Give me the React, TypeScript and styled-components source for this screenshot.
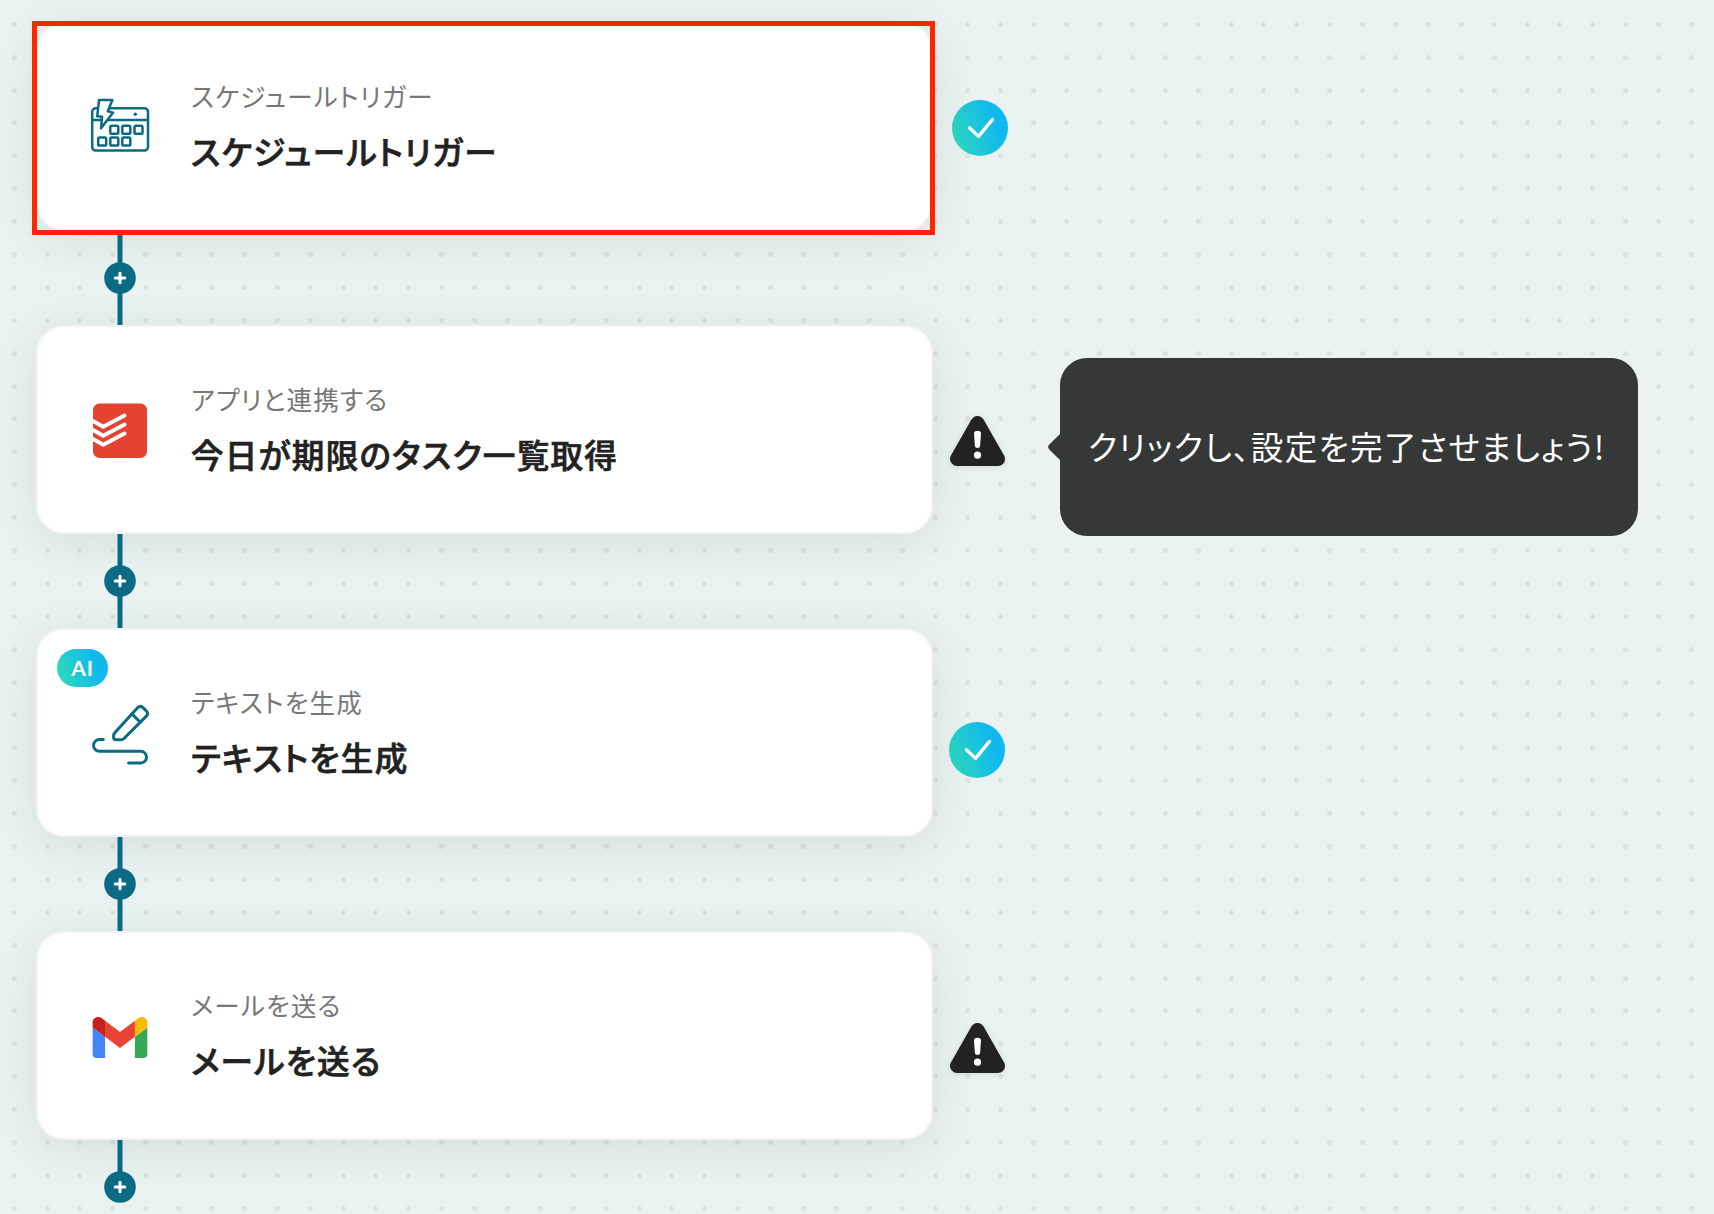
import styled, { createGlobalStyle } from "styled-components"

type IconName = 'calendar' | 'todoist' | 'pen' | 'gmail'

interface Step {
    label: string
    title: string
    icon: IconName
    done: boolean
    ai?: boolean
    selected?: boolean
    hint?: string
    statusTop: number
    statusGap: number
}

const steps: Step[] = [
    { label: 'スケジュールトリガー', title: 'スケジュールトリガー', icon: 'calendar', done: true, selected: true, statusTop: 77.5, statusGap: 19 },
    { label: 'アプリと連携する', title: '今日が期限のタスク一覧取得', icon: 'todoist', done: false, hint: 'クリックし、設定を完了させましょう!', statusTop: 91.3, statusGap: 17 },
    { label: 'テキストを生成', title: 'テキストを生成', icon: 'pen', done: true, ai: true, statusTop: 94, statusGap: 16 },
    { label: 'メールを送る', title: 'メールを送る', icon: 'gmail', done: false, statusTop: 91.5, statusGap: 17 },
]

const PITCH = 32.889

function DotGrid () {
    const dots = []
    for (let row = 0; row < 37; row++) {
        for (let col = 0; col < 52; col++) {
            dots.push(
                <circle
                    key={`${row}-${col}`}
                    cx={14.5 + Math.floor(col * PITCH + 0.15)}
                    cy={24.5 + Math.floor(row * PITCH + 0.28)}
                    r="2.5"
                />
            )
        }
    }
    return <Dots width="1714" height="1214" fill="#dbe2e1">{dots}</Dots>
}

function CalendarIcon () {
    return (
        <svg width="64" height="65" viewBox="0 0 64 65" fill="none" stroke="#0b6a84" strokeWidth="2.5" strokeLinejoin="round">
            <rect x="4.2" y="14.3" width="55.8" height="42.3" rx="3.5" />
            <path d="M4 26h56" />
            <circle cx="47.3" cy="20.3" r="1.7" fill="#0b6a84" stroke="none" />
            <rect x="22.3" y="31.8" width="8" height="8" rx="1.4" />
            <rect x="34.3" y="31.8" width="8" height="8" rx="1.4" />
            <rect x="46.5" y="31.8" width="8" height="8" rx="1.4" />
            <rect x="10.2" y="43.6" width="8" height="8" rx="1.4" />
            <rect x="22.3" y="43.6" width="8" height="8" rx="1.4" />
            <rect x="34.3" y="43.6" width="8" height="8" rx="1.4" />
            <path d="M11 6h13.4l-4.6 11.3 5.3 1.3-12 15.6 1-11.5-4.9-.4z" fill="#fff" />
        </svg>
    )
}

function TodoistIcon () {
    return (
        <svg width="64" height="65" viewBox="0 0 64 65">
            <clipPath id="todoist">
                <rect x="5" y="6.5" width="54" height="54.5" rx="6.5" />
            </clipPath>
            <g clipPath="url(#todoist)">
                <rect x="5" y="6" width="54" height="55" fill="#e44332" />
                <g fill="none" stroke="#fff" strokeWidth="3.9" strokeLinecap="round" strokeLinejoin="round">
                    <path d="M3 22.8l12.2 7L36.5 18.5" />
                    <path d="M3 31.8l12.2 7L36.5 27.5" />
                    <path d="M3 40.8l12.2 7L36.5 36.5" />
                </g>
            </g>
        </svg>
    )
}

function PenIcon () {
    return (
        <svg width="64" height="65" viewBox="0 0 64 65" fill="none" stroke="#0b6a84" strokeWidth="3" strokeLinecap="round" strokeLinejoin="round">
            <path d="M25.6 36q0-2 1.4-3.4L49.8 7.6q2.7-2.4 5.2 0l3.6 3.7q2.1 2.3 0 4.6L36 38.5q-1.4 1.3-3.2 1.3H28.1q-2.5 0-2.5-2.5z" />
            <path d="M43.8 13.8l8.5 8.4" />
            <path d="M15.3 39.6H11.4a5.85 5.85 0 0 0 0 11.7H52.7a5.85 5.85 0 0 1 0 11.7H40.6" />
        </svg>
    )
}

function GmailIcon () {
    return (
        <svg width="64" height="65" viewBox="0 0 64 65">
            <g transform="translate(4.6 14) scale(.622 .62) translate(-52 -42)">
                <path fill="#4285f4" d="M58 108h14V74L52 59v43c0 3.32 2.69 6 6 6" />
                <path fill="#34a853" d="M120 108h14c3.32 0 6-2.69 6-6V59l-20 15" />
                <path fill="#fbbc04" d="M120 48v26l20-15v-8c0-7.42-8.47-11.65-14.4-7.2" />
                <path fill="#ea4335" d="M72 74V48l24 18 24-18v26L96 92" />
                <path fill="#c5221f" d="M52 51v8l20 15V48l-5.6-4.2c-5.94-4.45-14.4-.22-14.4 7.2" />
            </g>
        </svg>
    )
}

const icons = {
    calendar: CalendarIcon,
    todoist: TodoistIcon,
    pen: PenIcon,
    gmail: GmailIcon,
}

function CheckMark () {
    return (
        <svg width="56" height="56" viewBox="0 0 56 56" fill="none">
            <path d="M17.4 27.7l9.2 8.7L40.5 19.4" stroke="#fff" strokeWidth="3.3" strokeLinecap="round" strokeLinejoin="round" />
        </svg>
    )
}

function WarningMark () {
    return (
        <svg width="55" height="50" viewBox="0 0 55 50">
            <path d="M27.5 7L7 43h41z" fill="#222" stroke="#222" strokeWidth="14" strokeLinejoin="round" />
            <path d="M24 17.5q0-2.8 3.5-2.8t3.5 2.8l-.9 12.4q-.2 2.1-2.6 2.1t-2.6-2.1z" fill="#fff" />
            <circle cx="27.5" cy="39.2" r="3.6" fill="#fff" />
        </svg>
    )
}

function AddStep ({ last }: { last: boolean }) {
    return (
        <Connector width="32" height="94" viewBox="0 0 32 94">
            <path d={last ? 'M16 0v47' : 'M16 0v94'} stroke="#0b6a84" strokeWidth="5" />
            <circle cx="16" cy="47" r="15.8" fill="#0b6a84" />
            <path d="M16 42.2v9.6M11.2 47h9.6" stroke="#fff" strokeWidth="3" strokeLinecap="round" />
        </Connector>
    )
}

export default function App () {
    return (
        <>
            <GlobalStyle />
            <Canvas>
                <DotGrid />
                <Flow>
                    {steps.map((step, index) => {
                        const Icon = icons[step.icon]
                        return (
                            <div key={index}>
                                <StepRow>
                                    <Card $selected={step.selected}>
                                        {step.ai && <AiBadge>AI</AiBadge>}
                                        <Icon />
                                        <CardText>
                                            <Label>{step.label}</Label>
                                            <Title>{step.title}</Title>
                                        </CardText>
                                    </Card>
                                    <Status $done={step.done} $top={step.statusTop} $gap={step.statusGap}>
                                        {step.done ? <CheckMark /> : <WarningMark />}
                                    </Status>
                                    {step.hint && (
                                        <Hint>
                                            <HintArrow width="12" height="28" viewBox="0 0 12 28">
                                                <path d="M12 1v26L1.3 16.6q-2.3-2.6 0-5.2z" fill="#222" />
                                            </HintArrow>
                                            <HintText>{step.hint}</HintText>
                                        </Hint>
                                    )}
                                </StepRow>
                                <AddStep last={index === steps.length - 1} />
                            </div>
                        )
                    })}
                </Flow>
            </Canvas>
        </>
    )
}

const GlobalStyle = createGlobalStyle`
    * {
        box-sizing: border-box;
        margin: 0;
    }

    body {
        background-color: #eaf3f2;
        font-family: "Noto Sans CJK JP", sans-serif;
        overflow: hidden;
    }

    svg {
        display: block;
        flex-shrink: 0;
    }
`

const Canvas = styled.div`
    position: relative;
    width: 1714px;
    height: 1214px;
    overflow: hidden;
`

const Dots = styled.svg`
    position: absolute;
    inset: 0;
`

const Flow = styled.main`
    position: relative;
    padding: 22px 0 0 36px;
`

const StepRow = styled.div`
    display: flex;
    align-items: flex-start;
    height: 209px;
`

const Card = styled.section<{ $selected?: boolean }>`
    position: relative;
    display: flex;
    align-items: center;
    gap: 39px;
    width: 897px;
    height: 209px;
    padding-left: 50px;
    background-color: #fff;
    border: 2px solid #f3f3f3;
    border-radius: 28px;
    box-shadow: 0 8px 48px rgba(0, 0, 0, 0.09);

    ${(props) => props.$selected && `
        &::after {
            content: "";
            position: absolute;
            inset: -3px -4px -6px -6px;
            border: 5px solid #ff2600;
            z-index: 2;
        }
    `}
`

const CardText = styled.div`
    display: flex;
    flex-direction: column;
    padding-bottom: 5px;
    font-feature-settings: "palt";
    white-space: nowrap;
`

const Label = styled.p`
    color: #777;
    font-size: 25.6px;
    line-height: 54px;
    letter-spacing: 1.15px;
`

/* the thin stroke lifts the medium face to a semi-bold */
const Title = styled.h2`
    color: #222;
    font-size: 32.6px;
    font-weight: 500;
    line-height: 56px;
    letter-spacing: 1.25px;
    -webkit-text-stroke: 0.7px #222;
`

const AiBadge = styled.span`
    position: absolute;
    top: 19px;
    left: 19px;
    display: flex;
    align-items: center;
    justify-content: center;
    width: 51px;
    height: 38px;
    padding-bottom: 2px;
    border-radius: 19px;
    background: linear-gradient(70deg, #2fdabb 5%, #10b8ee 75%);
    color: #fff;
    font-family: Lato, sans-serif;
    font-size: 21px;
    font-weight: 700;
    letter-spacing: 0.8px;
`

const Status = styled.div<{ $done: boolean, $top: number, $gap: number }>`
    flex-shrink: 0;
    margin: ${(props) => props.$top}px 0 0 ${(props) => props.$gap}px;
    border-radius: 50%;
    background: ${(props) => props.$done ? 'linear-gradient(70deg, #2fdabb 5%, #10b8ee 75%)' : 'none'};
    filter: ${(props) => props.$done ? 'none' : 'drop-shadow(0 1px 3px rgba(0, 0, 0, 0.1))'};
`

const Hint = styled.div`
    position: relative;
    display: flex;
    align-items: center;
    width: 578px;
    height: 178px;
    margin: 33px 0 0 55px;
    padding: 0 0 4px 28px;
    border-radius: 27px;
    background-color: rgba(34, 34, 34, 0.9);
`

const HintArrow = styled.svg`
    position: absolute;
    top: 75px;
    left: -12px;
    opacity: 0.9;
`

const HintText = styled.p`
    color: #fff;
    font-size: 32.6px;
    letter-spacing: 1.35px;
    font-feature-settings: "palt";
    white-space: nowrap;
`

const Connector = styled.svg`
    position: relative;
    z-index: 1;
    margin-left: 68px;
`
